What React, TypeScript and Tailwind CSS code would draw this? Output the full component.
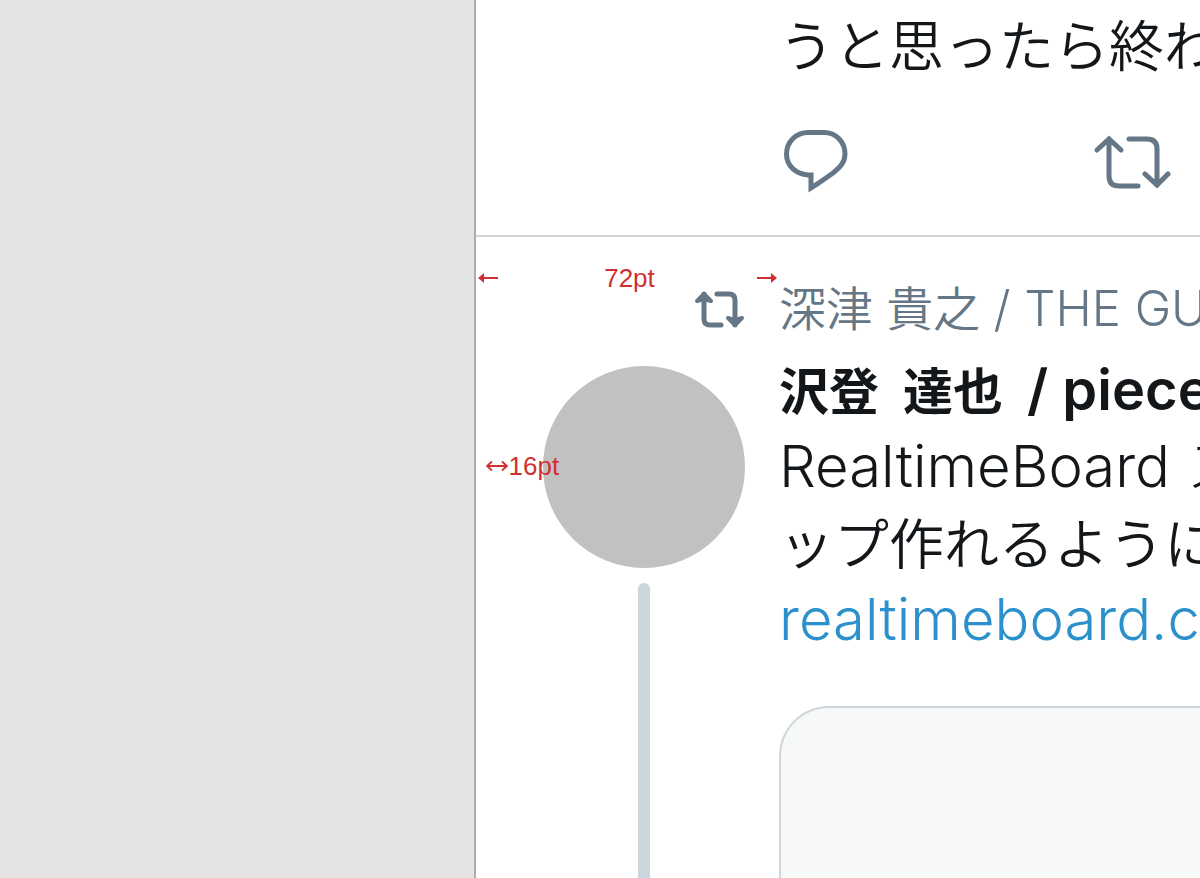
import type { ReactNode } from "react";

const RED = "text-[#d03030]";

function ReplyIcon() {
  return (
    <svg viewBox="0 0 66 66" className="h-[66px] w-[66px]" fill="none" stroke="#657786" strokeWidth="5" aria-hidden="true">
      <path
        d="M25 3.500H41C53 3.500 62 13 62 25C62 34 56 39 50 44C43 49 36 54 28 59V46H25C13 45 3.500 37 3.500 25C3.500 13 13 3.500 25 3.500Z"
        strokeLinejoin="miter"
      />
    </svg>
  );
}

function RetweetIcon() {
  return (
    <svg viewBox="0 0 80 56" className="h-[56px] w-[80px]" fill="none" stroke="#657786" strokeWidth="5" strokeLinecap="round" aria-hidden="true">
      <path d="M6 16L18 5L30 16M18 5V42Q18 52 28 52H47" />
      <path d="M39 5H57Q67 5 67 15V51M55 40L67 51L78 40" transform="translate(-1 0)" />
    </svg>
  );
}

function RetweetedIcon() {
  return (
    <svg viewBox="0 0 52 40" className="h-[40px] w-[52px]" fill="none" stroke="#657786" strokeWidth="5" strokeLinecap="round" strokeLinejoin="round" aria-hidden="true">
      <path d="M11 5V30Q11 36 17 36H28" />
      <path d="M24 5H36Q42 5 42 11V36" />
      <path d="M4 12L11 5L18 12L11 10Z" fill="#657786" strokeWidth="4" />
      <path d="M35 29L42 36L49 29L42 31Z" fill="#657786" strokeWidth="4" />
    </svg>
  );
}

function ArrowLeft() {
  return (
    <svg viewBox="0 0 20 12" className="h-3 w-5" aria-hidden="true">
      <path d="M5 6H20" stroke="#d03030" strokeWidth="2" />
      <path d="M0 6L6 1V11Z" fill="#d03030" />
    </svg>
  );
}

function ArrowRight() {
  return (
    <svg viewBox="0 0 20 12" className="h-3 w-5" aria-hidden="true">
      <path d="M0 6H15" stroke="#d03030" strokeWidth="2" />
      <path d="M20 6L14 1V11Z" fill="#d03030" />
    </svg>
  );
}

function ArrowBoth() {
  return (
    <svg viewBox="0 0 22 12" className="h-3 w-[22px]" fill="none" stroke="#d03030" strokeWidth="1.800" aria-hidden="true">
      <path d="M1 6H21M6 1.500L1 6L6 10.500M16 1.500L21 6L16 10.500" />
    </svg>
  );
}

function Row({ gutter, children }: { gutter?: ReactNode; children: ReactNode }) {
  return (
    <div className="flex">
      <div className="w-[303px] shrink-0">{gutter}</div>
      <div className="min-w-0 flex-1 overflow-hidden">{children}</div>
    </div>
  );
}

export default function App() {
  return (
    <div
      lang="ja"
      className="flex h-screen overflow-hidden bg-[#e4e4e4] font-['Inter','Noto_Sans_CJK_JP',sans-serif] text-[#14171a]"
    >
      <div className="w-[474px] shrink-0" />
      <main className="flex min-w-0 flex-1 flex-col overflow-hidden border-l-2 border-[#adadad] bg-white whitespace-nowrap">
        <article className="border-b-2 border-[#cfd4d8] pb-10">
          <Row>
            <p className="pt-2 text-[55px] leading-[76px] font-[350]">うと思ったら終わ</p>
            <div className="flex items-center gap-[242px] pt-[45px] pl-1">
              <button type="button" aria-label="返信" className="shrink-0">
                <ReplyIcon />
              </button>
              <button type="button" aria-label="リツイート" className="shrink-0">
                <RetweetIcon />
              </button>
            </div>
          </Row>
        </article>

        <article className="flex flex-1 flex-col">
          <div className={`flex h-[49px] w-[301px] items-center justify-between pt-8 pl-[2px] ${RED} font-['Liberation_Sans',Arial,sans-serif] text-[26px] leading-6`}>
            <ArrowLeft />
            <span className="pl-1">72pt</span>
            <ArrowRight />
          </div>
          <Row
            gutter={
              <div className="flex h-full items-center justify-end pr-[34px]">
                <RetweetedIcon />
              </div>
            }
          >
            <p className="h-[46px] text-[47px] leading-[46px] font-[350] text-[#657786]">
              深津 貴之 <span className="text-[49px] font-light">/ THE GUILD</span>
            </p>
          </Row>
          <div className="flex flex-1">
            <div className="flex w-[303px] shrink-0 flex-col items-center gap-[15px] pt-[34px] pl-8">
              <div className="relative h-[202px] w-[202px] shrink-0 rounded-full bg-[#c1c1c1]">
                <div className={`absolute top-[86px] -left-[57px] flex items-center gap-px font-['Liberation_Sans',Arial,sans-serif] text-[26px] leading-7 ${RED}`}>
                  <ArrowBoth />
                  <span>16pt</span>
                </div>
              </div>
              <div className="w-3 flex-1 rounded-t-full bg-[#cbd5dc]" />
            </div>
            <div className="flex min-w-0 flex-1 flex-col overflow-hidden pt-5">
              <h2 className="flex h-[76px] items-baseline gap-6 text-[50px] leading-[76px] font-semibold">
                <span>沢登</span>
                <span>達也</span>
                <span className="text-[56px]">/ pieces</span>
              </h2>
              <p className="h-[77px] text-[58px] leading-[77px] font-light">RealtimeBoard ストーリーマ</p>
              <p className="h-[76px] text-[55px] leading-[78px] font-[350]">ップ作れるように</p>
              <a href="#" className="h-[76px] text-[58px] leading-[76px] font-light text-[#2b90cb]">
                realtimeboard.com
              </a>
              <div className="mt-[49px] -mr-1 flex-1 rounded-tl-[50px] border-2 border-b-0 border-[#ccd6dd] bg-[#f7f8f8]" />
            </div>
          </div>
        </article>
      </main>
    </div>
  );
}
